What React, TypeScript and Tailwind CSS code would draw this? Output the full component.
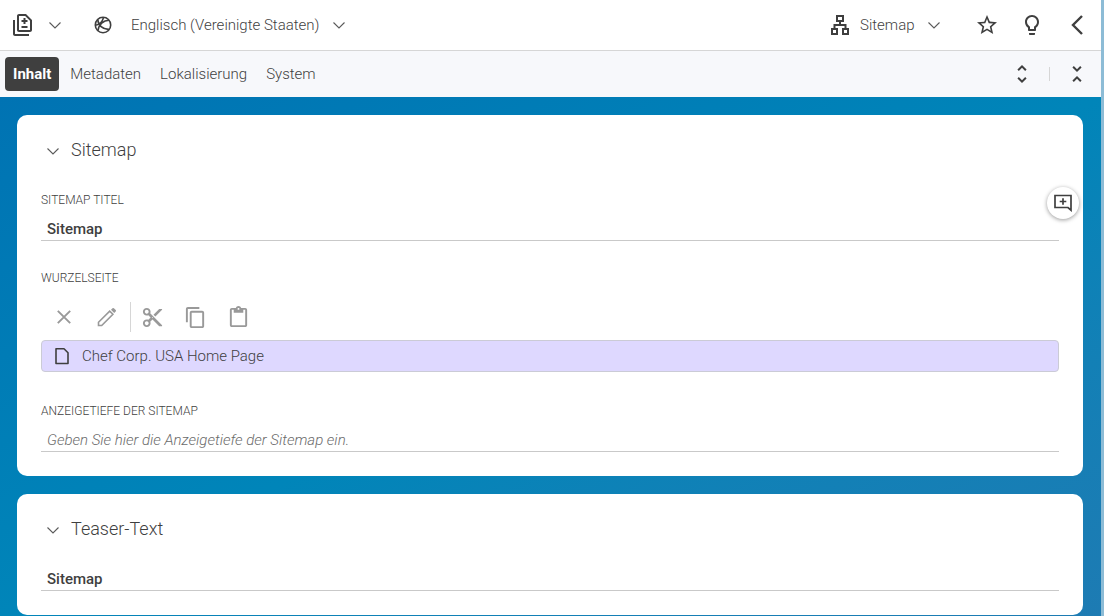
import { useState } from 'react';
import type { ReactNode } from 'react';
import {
    MdContentCopy,
    MdContentCut,
    MdContentPaste,
    MdOutlineDifference,
    MdOutlineLightbulb,
    MdStarOutline,
    MdUnfoldLess,
    MdUnfoldMore,
} from 'react-icons/md';

const tabs = ['Inhalt', 'Metadaten', 'Lokalisierung', 'System'];

const ChevronDown = () => (
    <svg width="12" height="8" viewBox="0 0 12 8" fill="none" stroke="#5a5a5a" strokeWidth="1.1" aria-hidden="true">
        <path d="M.5 1.500 6 7l5.500-5.500" />
    </svg>
);

const ChevronLeft = () => (
    <svg width="12" height="20" viewBox="0 0 12 20" fill="none" stroke="currentColor" strokeWidth="2.400" aria-hidden="true">
        <path d="M11 1 2 10l9 9" />
    </svg>
);

const GlobeIcon = () => (
    <svg width="18" height="18" viewBox="0 0 18 18" fill="none" stroke="currentColor" strokeWidth="1.600" aria-hidden="true">
        <circle cx="9" cy="9" r="7.700" />
        <path d="M15 4.300C9.500 4.300 4.500 8.500 4 14.800M3.800 3.500C4 9 8.500 13.800 15.300 13.300M1.300 9.300C5 9 8.500 6 9.500 1.500" />
    </svg>
);

const SitemapIcon = () => (
    <svg width="18" height="20" viewBox="0 0 18 20" fill="none" stroke="currentColor" strokeWidth="2" aria-hidden="true">
        <path d="M6 1h6v5H6zM1 14h5v5H1zM12 14h5v5h-5zM9 6v4M3.500 14v-4h11v4" />
    </svg>
);

const CloseIcon = () => (
    <svg width="14" height="14" viewBox="0 0 14 14" fill="none" stroke="currentColor" strokeWidth="1.900" aria-hidden="true">
        <path d="m.8.8 12.400 12.400M13.200.8.8 13.200" />
    </svg>
);

const PencilIcon = () => (
    <svg width="20" height="20" viewBox="0 0 20 20" fill="none" stroke="currentColor" strokeWidth="1.600" aria-hidden="true">
        <path d="M1.500 18.500v-3.200L12.700 4.100l3.200 3.200L4.700 18.500z" />
        <path d="m14 2.800 1.500-1.500q.7-.7 1.400 0l1.800 1.800q.7.7 0 1.400L17.200 6z" fill="currentColor" stroke="none" />
    </svg>
);

const PageIcon = () => (
    <svg width="14" height="18" viewBox="0 0 14 18" fill="none" stroke="currentColor" strokeWidth="1.600" strokeLinejoin="round" aria-hidden="true">
        <path d="M1 1.800h8l4 4v10.700H1z" />
    </svg>
);

const AddCommentIcon = () => (
    <svg width="18" height="18" viewBox="0 0 18 18" fill="none" stroke="currentColor" strokeWidth="1.700" aria-hidden="true">
        <path d="M1 1.500h16v14.700l-3-2.700H1zM9 4.200v6.600M5.700 7.500h6.600" />
    </svg>
);

const Select = ({ label, value }: { label: string; value: string }) => (
    <span className="flex items-center">
        <select aria-label={label} className="cursor-pointer appearance-none bg-transparent pr-[25px] font-light outline-none">
            <option>{value}</option>
        </select>
        <span className="pointer-events-none -ml-3">
            <ChevronDown />
        </span>
    </span>
);

const Panel = ({ title, children }: { title: string; children: ReactNode }) => {
    const [open, setOpen] = useState(true);

    return (
        <section className="relative rounded-[10px] bg-white p-6">
            <h2>
                <button
                    aria-expanded={open}
                    onClick={() => setOpen(!open)}
                    className="flex h-6 items-center gap-3 pl-1.5 text-lg font-light"
                >
                    <ChevronDown />
                    <span className="self-start leading-[22px]">{title}</span>
                </button>
            </h2>
            {open && children}
        </section>
    );
};

const inputClass =
    'block h-[25px] w-full border-b border-[#c9c9c9] px-1.5 pt-0.5 text-[15px] font-medium outline-none placeholder:font-light placeholder:text-[#6b6b6b] placeholder:italic';

const labelClass = 'block text-xs leading-4 font-light uppercase';

const App = () => {
    const [activeTab, setActiveTab] = useState('Inhalt');
    const [title, setTitle] = useState('Sitemap');
    const [teaser, setTeaser] = useState('Sitemap');
    const [depth, setDepth] = useState('');

    return (
        <div className="flex min-h-screen flex-col border-r-3 border-[#8dbcd6] font-[Roboto,sans-serif] text-[15px] text-[#3f3f3f]">
            {/* Toolbar */}
            <header className="flex h-[51px] items-center justify-between border-b border-[#d6d6d6] bg-white pr-[18px] pl-[11px]">
                <div className="flex items-center">
                    <button aria-label="Versionen" className="mr-[33px] flex items-center gap-3.5">
                        <MdOutlineDifference size={24} />
                        <ChevronDown />
                    </button>
                    <span className="mr-[19px]">
                        <GlobeIcon />
                    </span>
                    <Select label="Sprache" value="Englisch (Vereinigte Staaten)" />
                </div>
                <div className="flex items-center">
                    <span className="mr-[11px]">
                        <SitemapIcon />
                    </span>
                    <Select label="Ansicht" value="Sitemap" />
                    <button aria-label="Lesezeichen" className="ml-[35px]">
                        <MdStarOutline size={24} />
                    </button>
                    <button aria-label="Hinweise" className="ml-[21px]">
                        <MdOutlineLightbulb size={24} />
                    </button>
                    <button aria-label="Einklappen" className="ml-[27px]">
                        <ChevronLeft />
                    </button>
                </div>
            </header>

            {/* Tabs */}
            <nav className="flex h-[46px] items-center justify-between bg-[#f7f8fb] pr-3 pl-[5px]">
                <div role="tablist" className="flex gap-[3px]">
                    {tabs.map((tab) => (
                        <button
                            key={tab}
                            role="tab"
                            aria-selected={activeTab === tab}
                            onClick={() => setActiveTab(tab)}
                            className={`h-[34px] rounded px-2 ${
                                activeTab === tab ? 'bg-[#3f3f3f] font-bold text-white' : 'font-light'
                            }`}
                        >
                            {tab}
                        </button>
                    ))}
                </div>
                <div className="flex items-center gap-[15px]">
                    <button aria-label="Alle ausklappen">
                        <MdUnfoldMore size={24} />
                    </button>
                    <span className="h-3.5 w-px bg-[#d6d6d6]" />
                    <button aria-label="Alle einklappen">
                        <MdUnfoldLess size={24} />
                    </button>
                </div>
            </nav>

            {/* Form */}
            <main className="flex flex-1 flex-col gap-[18px] bg-linear-to-br from-[#0073b3] via-[#0085b9] to-[#1d7bb3] pt-[18px] pr-[18px] pl-[17px]">
                <Panel title="Sitemap">
                    <div className="mt-[29px]">
                        <label htmlFor="title" className={labelClass}>
                            Sitemap Titel
                        </label>
                        <input id="title" value={title} onChange={(e) => setTitle(e.target.value)} className={`mt-2 ${inputClass}`} />
                    </div>

                    <div className="mt-[29px] pb-0.5">
                        <h3 className={labelClass}>Wurzelseite</h3>
                        <div className="mt-4 flex h-[30px] items-center text-[#999]">
                            <button aria-label="Entfernen" className="ml-4">
                                <CloseIcon />
                            </button>
                            <button aria-label="Bearbeiten" className="ml-[26px]">
                                <PencilIcon />
                            </button>
                            <span className="mr-2.5 ml-[13px] h-full w-px bg-[#d6d6d6]" />
                            <div className="flex gap-5">
                                <button aria-label="Ausschneiden">
                                    <MdContentCut size={23} />
                                </button>
                                <button aria-label="Kopieren">
                                    <MdContentCopy size={23} />
                                </button>
                                <button aria-label="Einfügen">
                                    <MdContentPaste size={23} />
                                </button>
                            </div>
                        </div>
                        <ul className="mt-2">
                            <li className="flex h-8 items-center gap-[13px] rounded border border-[#cbcbd6] bg-[#ded8ff] px-[13px] font-light">
                                <PageIcon />
                                Chef Corp. USA Home Page
                            </li>
                        </ul>
                    </div>

                    <div className="mt-[29px]">
                        <label htmlFor="depth" className={labelClass}>
                            Anzeigetiefe der Sitemap
                        </label>
                        <input
                            id="depth"
                            value={depth}
                            onChange={(e) => setDepth(e.target.value)}
                            placeholder="Geben Sie hier die Anzeigetiefe der Sitemap ein."
                            className={`mt-2 ${inputClass}`}
                        />
                    </div>

                    <button
                        aria-label="Kommentar hinzufügen"
                        className="absolute top-[72px] right-1 flex size-8 items-center justify-center rounded-full bg-white shadow-[0_1px_4px_rgba(0,0,0,0.4)]"
                    >
                        <AddCommentIcon />
                    </button>
                </Panel>

                <Panel title="Teaser-Text">
                    <input
                        aria-label="Teaser-Text"
                        value={teaser}
                        onChange={(e) => setTeaser(e.target.value)}
                        className={`mt-6 ${inputClass}`}
                    />
                </Panel>
            </main>
        </div>
    );
};

export default App;
